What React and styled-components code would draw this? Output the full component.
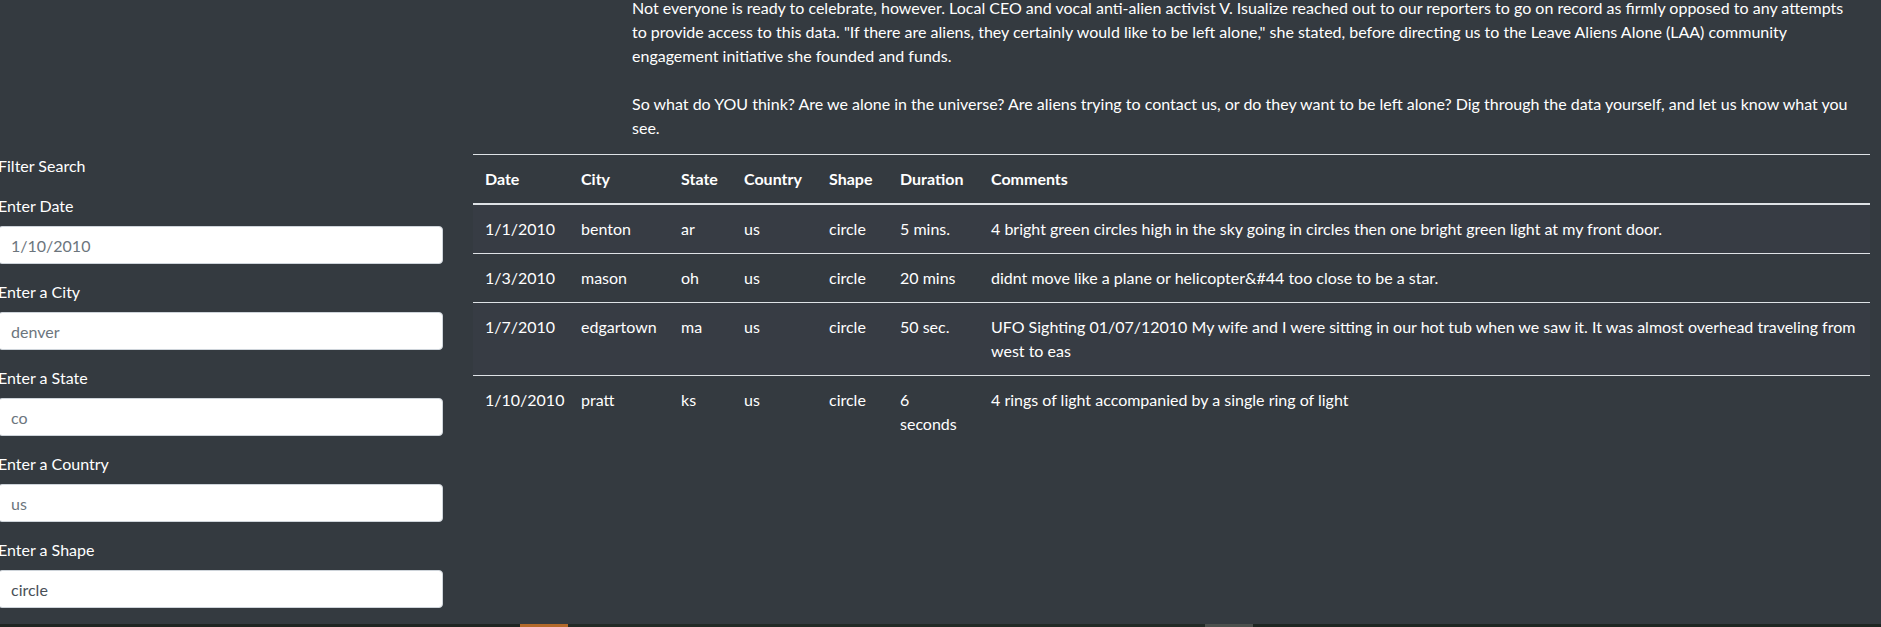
import React from "react";
import styled, { createGlobalStyle } from "styled-components";

const GlobalStyle = createGlobalStyle`
  html, body {
    margin: 0;
    padding: 0;
    background: #343a40;
  }
  body {
    font-family: Lato, "Liberation Sans", sans-serif;
    font-size: 16px;
    line-height: 24px;
    color: #ffffff;
    overflow: hidden;
  }
  * { box-sizing: border-box; }
`;

const Page = styled.div`
  display: flex;
  flex-direction: column;
`;

const Intro = styled.p`
  margin: -4px 11px 14px 632px;
`;

const Row = styled.div`
  display: flex;
  gap: 30px;
  margin-left: -2px;
  padding-right: 11px;
`;

const Sidebar = styled.form`
  width: 445px;
  flex: none;
`;

const SidebarTitle = styled.div`
  margin-bottom: 16px;
`;

const FormGroup = styled.div`
  margin-bottom: 16px;
`;

const Label = styled.label`
  display: block;
  margin-bottom: 8px;
`;

const Input = styled.input`
  display: block;
  width: 100%;
  height: 38px;
  padding: 6px 12px;
  font-family: inherit;
  font-size: 16px;
  line-height: 24px;
  color: #495057;
  background: #ffffff;
  border: 1px solid #ced4da;
  border-radius: 4px;
  outline: none;
  &::placeholder {
    color: #6c757d;
    opacity: 1;
  }
`;

const Main = styled.div`
  flex: 1;
  min-width: 0;
`;

const Table = styled.table`
  width: 100%;
  border-collapse: collapse;
  table-layout: fixed;
  color: #ffffff;
`;

const Th = styled.th`
  padding: 12px;
  text-align: left;
  font-weight: 700;
  vertical-align: bottom;
  border-top: 1px solid #dee2e6;
  border-bottom: 2px solid #dee2e6;
`;

const Tr = styled.tr`
  background: ${(p) => (p.$striped ? "#373c44" : "transparent")};
`;

const Td = styled.td`
  padding: 12px ${(p) => (p.$last ? "4px" : "12px")} 12px 12px;
  vertical-align: top;
  border-top: 1px solid #dee2e6;
`;

const FooterStrip = styled.div`
  height: 200px;
  background: linear-gradient(
    to right,
    #1f2522 0,
    #1f2522 520px,
    #b3692a 520px,
    #b3692a 568px,
    #222a26 568px,
    #222a26 1205px,
    #4b504d 1205px,
    #4b504d 1253px,
    #1e2622 1253px
  );
`;

const fields = [
  { label: "Enter Date", placeholder: "1/10/2010" },
  { label: "Enter a City", placeholder: "denver" },
  { label: "Enter a State", placeholder: "co" },
  { label: "Enter a Country", placeholder: "us" },
  { label: "Enter a Shape", value: "circle" },
];

const columns = [
  { title: "Date", width: 96 },
  { title: "City", width: 100 },
  { title: "State", width: 63 },
  { title: "Country", width: 85 },
  { title: "Shape", width: 71 },
  { title: "Duration", width: 91 },
  { title: "Comments" },
];

const rows = [
  ["1/1/2010", "benton", "ar", "us", "circle", "5 mins.", "4 bright green circles high in the sky going in circles then one bright green light at my front door."],
  ["1/3/2010", "mason", "oh", "us", "circle", "20 mins", "didnt move like a plane or helicopter&#44 too close to be a star."],
  ["1/7/2010", "edgartown", "ma", "us", "circle", "50 sec.", "UFO Sighting 01/07/12010 My wife and I were sitting in our hot tub when we saw it. It was almost overhead traveling from west to eas"],
  ["1/10/2010", "pratt", "ks", "us", "circle", "6 seconds", "4 rings of light accompanied by a single ring of light"],
];

export default function App() {
  return (
    <>
      <GlobalStyle />
      <Page>
        <Intro>
          Not everyone is ready to celebrate, however. Local CEO and vocal anti-alien activist V. Isualize reached out to our reporters to go on record as firmly opposed to any attempts
          <br />
          to provide access to this data. "If there are aliens, they certainly would like to be left alone," she stated, before directing us to the Leave Aliens Alone (LAA) community
          <br />
          engagement initiative she founded and funds.
          <br />
          <br />
          So what do YOU think? Are we alone in the universe? Are aliens trying to contact us, or do they want to be left alone? Dig through the data yourself, and let us know what you
          <br />
          see.
        </Intro>
        <Row>
          <Sidebar onSubmit={(e) => e.preventDefault()}>
            <SidebarTitle>Filter Search</SidebarTitle>
            {fields.map((f) => (
              <FormGroup key={f.label}>
                <Label>{f.label}</Label>
                {f.value ? (
                  <Input type="text" defaultValue={f.value} />
                ) : (
                  <Input type="text" placeholder={f.placeholder} />
                )}
              </FormGroup>
            ))}
          </Sidebar>
          <Main>
            <Table>
              <colgroup>
                {columns.map((c) => (
                  <col key={c.title} style={c.width ? { width: c.width } : undefined} />
                ))}
              </colgroup>
              <thead>
                <tr>
                  {columns.map((c) => (
                    <Th key={c.title}>{c.title}</Th>
                  ))}
                </tr>
              </thead>
              <tbody>
                {rows.map((r, i) => (
                  <Tr key={i} $striped={i % 2 === 0}>
                    {r.map((cell, j) => (
                      <Td key={j} $last={j === r.length - 1}>
                        {cell}
                      </Td>
                    ))}
                  </Tr>
                ))}
              </tbody>
            </Table>
          </Main>
        </Row>
        <FooterStrip />
      </Page>
    </>
  );
}
